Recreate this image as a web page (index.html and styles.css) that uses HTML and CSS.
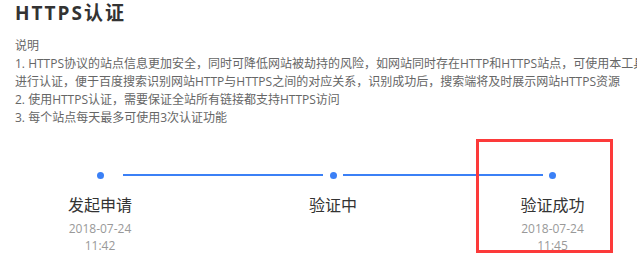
FILE: index.html
```html
<!DOCTYPE html>
<html lang="zh-CN">

<head>
  <meta charset="utf-8">
  <title>HTTPS认证</title>
  <link rel="stylesheet" href="styles.css">
</head>

<body>
  <!-- Main Content Start -->
  <div class="page">
    <h1 class="page-title">HTTPS认证</h1>

    <!-- Description -->
    <div class="intro">
      <div class="intro-line">说明</div>
      <div class="intro-line">1. HTTPS协议的站点信息更加安全，同时可降低网站被劫持的风险，如网站同时存在HTTP和HTTPS站点，可使用本工具</div>
      <div class="intro-line">进行认证，便于百度搜索识别网站HTTP与HTTPS之间的对应关系，识别成功后，搜索端将及时展示网站HTTPS资源</div>
      <div class="intro-line">2. 使用HTTPS认证，需要保证全站所有链接都支持HTTPS访问</div>
      <div class="intro-line">3. 每个站点每天最多可使用3次认证功能</div>
    </div>

    <!-- Steps -->
    <div class="steps">
      <span class="step-dot step-1"></span>
      <span class="step-line line-1"></span>
      <span class="step-dot step-2"></span>
      <span class="step-line line-2"></span>
      <span class="step-dot step-3"></span>

      <div class="step-info step-1">
        <div class="step-title">发起申请</div>
        <div class="step-time">2018-07-24<br>11:42</div>
      </div>
      <div class="step-info step-2">
        <div class="step-title">验证中</div>
      </div>
      <div class="step-info step-3">
        <div class="step-title">验证成功</div>
        <div class="step-time">2018-07-24<br>11:45</div>
      </div>

      <!-- Highlight box -->
      <div class="highlight"></div>
    </div>
  </div>
  <!-- Main Content End -->
</body>

</html>
```

FILE: styles.css
```css
/* Page base */
html,
body {
  overflow: hidden;
}

body {
  margin: 0;
  background-color: #fff;
  font-family: "Open Sans", "Noto Sans CJK SC", sans-serif;
  color: #666;
}

.page {
  padding: 0 15px;
}

/* Title */
.page-title {
  margin: 0;
  font-size: 19px;
  line-height: 26px;
  font-weight: bold;
  letter-spacing: 2px;
  color: #333;
}

/* Description */
.intro {
  margin-top: 11px;
  font-size: 12px;
  line-height: 18px;
}

.intro-line {
  white-space: nowrap;
}

/* Steps timeline */
.steps {
  position: relative;
  display: grid;
  grid-template-columns: 46px 200px 20px 200px 19px;
  grid-template-rows: 21px auto;
  row-gap: 8px;
  margin: 38px 0 0 62px;
}

.step-1 {
  grid-column: 1;
}

.step-2 {
  grid-column: 3;
}

.step-3 {
  grid-column: 5;
}

.step-dot {
  grid-row: 1;
  justify-self: center;
  align-self: center;
  width: 7px;
  height: 7px;
  border-radius: 50%;
  background-color: #3b80f6;
}

.step-line {
  grid-row: 1;
  align-self: start;
  margin-top: 9px;
  height: 2px;
  background-color: #3b80f6;
}

.line-1 {
  grid-column: 2;
}

.line-2 {
  grid-column: 4;
}

.step-info {
  grid-row: 2;
  justify-self: center;
  text-align: center;
  white-space: nowrap;
}

.step-title {
  font-size: 16px;
  line-height: 22px;
  color: #333;
}

.step-time {
  margin-top: 4px;
  font-size: 12px;
  line-height: 17px;
  color: #999;
}

/* Red highlight around the last step */
.highlight {
  position: absolute;
  left: 399px;
  top: -26px;
  width: 137px;
  height: 114px;
  box-sizing: border-box;
  border: 3px solid #fc3a3a;
}
```
